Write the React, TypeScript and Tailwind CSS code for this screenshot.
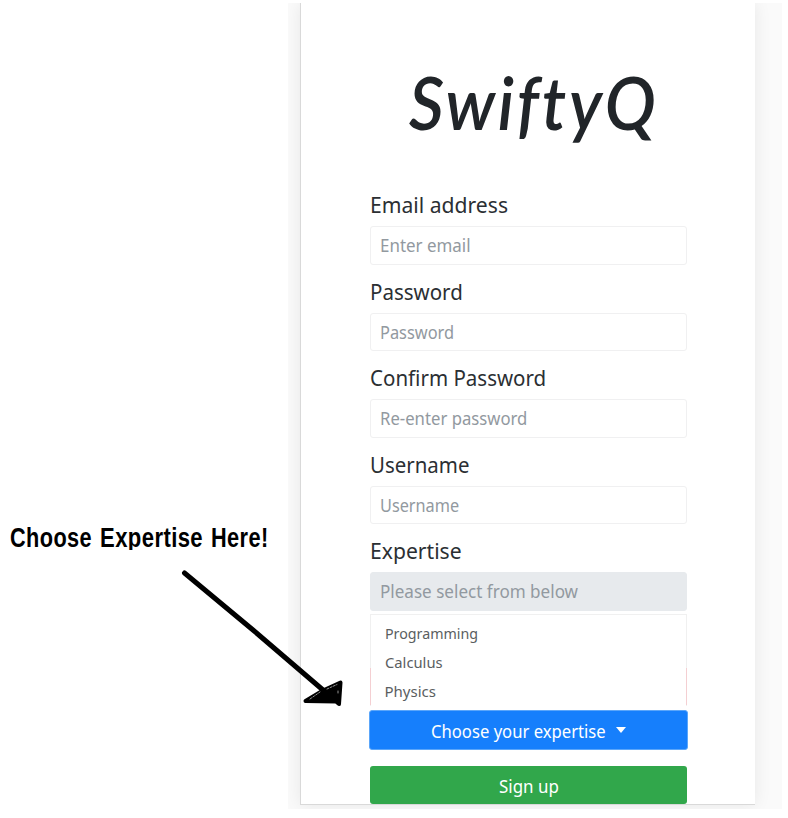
import { useLayoutEffect, useRef, useState } from "react";

type FitProps = { text: string; width: number; className?: string };

// Condenses or widens a run of text to an exact width.
function Fit({ text, width, className = "" }: FitProps) {
  const ref = useRef<HTMLSpanElement>(null);
  const [scale, setScale] = useState(1);
  useLayoutEffect(() => {
    if (ref.current) setScale(width / ref.current.offsetWidth);
  }, [width, text]);
  return (
    <span className="inline-block whitespace-nowrap" style={{ width }}>
      <span
        ref={ref}
        className={`inline-block origin-left whitespace-nowrap ${className}`}
        style={{ transform: `scaleX(${scale})` }}
      >
        {text}
      </span>
    </span>
  );
}

const fields = [
  { label: "Email address", lw: 138, hint: "Enter email", hw: 91 },
  { label: "Password", lw: 93, hint: "Password", hw: 74 },
  { label: "Confirm Password", lw: 176, hint: "Re-enter password", hw: 147 },
  { label: "Username", lw: 99, hint: "Username", hw: 79 },
  { label: "Expertise", lw: 92, hint: "Please select from below", hw: 198, disabled: true },
];

const options = [
  { name: "Programming", w: 93 },
  { name: "Calculus", w: 58 },
  { name: "Physics", w: 51 },
];

export default function App() {
  return (
    <div className="relative flex h-[818px] w-[788px] overflow-hidden bg-white font-['Noto_Sans',sans-serif]">
      <aside className="w-[288px] shrink-0 pt-[519px] pl-[10px]">
        <div className="flex h-[31px] gap-[8px] overflow-hidden font-['Liberation_Sans',sans-serif] text-[27px] leading-[38px] font-bold tracking-[0.5px] text-black">
          <Fit text="Choose" width={82} />
          <Fit text="Expertise" width={103} />
          <Fit text="Here!" width={58} />
        </div>
      </aside>

      <main className="mt-[3px] h-[806px] w-[494px] overflow-hidden bg-[#fafafa] pl-[12px]">
        <section className="h-[802px] w-[455px] border-b border-l border-[#d9d9d9] bg-white pl-[69px] shadow-[0_0_16px_rgba(0,0,0,0.08)]">
          <h1 className="h-[186px] pt-[55px] pl-[39px] font-['Lato',sans-serif] text-[74px] leading-[88px] font-semibold tracking-[3px] text-[#212529] italic">
            <Fit text="SwiftyQ" width={250} />
          </h1>

          <form className="w-[317px]">
            {fields.map((f) => (
              <div key={f.label} className="h-[86.6px]">
                <label className="block h-[37px] text-[22.5px] leading-[31px] text-[#2b2f33]">
                  <Fit text={f.label} width={f.lw} />
                </label>
                <div
                  className={`h-[38.5px] rounded-[3px] border px-[9px] text-[17.5px] leading-[37px] text-[#9299a0] ${
                    f.disabled ? "border-[#e7eaed] bg-[#e7eaed]" : "border-[#f0f0f1] bg-white"
                  }`}
                >
                  <Fit text={f.hint} width={f.hw} />
                </div>
              </div>
            ))}

            <div className="-mt-[7.5px] h-[96px]">
              <ul className="relative h-[92px] border border-b-0 border-[#f0f0f0] bg-white pt-[4px] pl-[13.5px] text-[15px] leading-[28.6px] text-[#5a5e61]">
                <li className="absolute top-[53px] -left-px h-[37px] w-px bg-[#f4cfd2]" />
                <li className="absolute top-[53px] -right-px h-[37px] w-px bg-[#f4cfd2]" />
                {options.map((o) => (
                  <li key={o.name} className="h-[28.6px]">
                    <Fit text={o.name} width={o.w} />
                  </li>
                ))}
              </ul>
            </div>

            <div className="-mx-px flex h-[40px] w-[319px] items-center justify-center gap-[10px] rounded-[3px] border border-[#5ba6fa] bg-[#167ffc] pt-px text-[17.5px] text-white">
              <Fit text="Choose your expertise" width={175} />
              <span className="mb-[2px] border-x-[5px] border-t-[6px] border-x-transparent border-t-white" />
            </div>
            <div className="mt-[16px] flex h-[37.5px] items-center justify-center rounded-[3px] bg-[#31a74b] pt-[2px] text-[17.5px] text-white">
              <Fit text="Sign up" width={60} />
            </div>
          </form>
        </section>
      </main>

      <svg
        className="absolute top-[560px] left-[170px]"
        width="200"
        height="160"
        viewBox="0 0 200 160"
        fill="none"
        strokeLinecap="round"
        strokeLinejoin="round"
      >
        <path d="M14.5 13 L83 70 L153 130" stroke="#000" strokeWidth="5" />
        <path d="M135.500 141 L153 130.500 L170.500 122.500 L169 144 L166 141.500 Z" fill="#000" stroke="#000" strokeWidth="4" />
        <path d="M140 139 L150 132 M157 129 L167 124.500 M168 131 v3" stroke="#bbb" strokeWidth="0.8" strokeDasharray="2 1.500" />
      </svg>
    </div>
  );
}
